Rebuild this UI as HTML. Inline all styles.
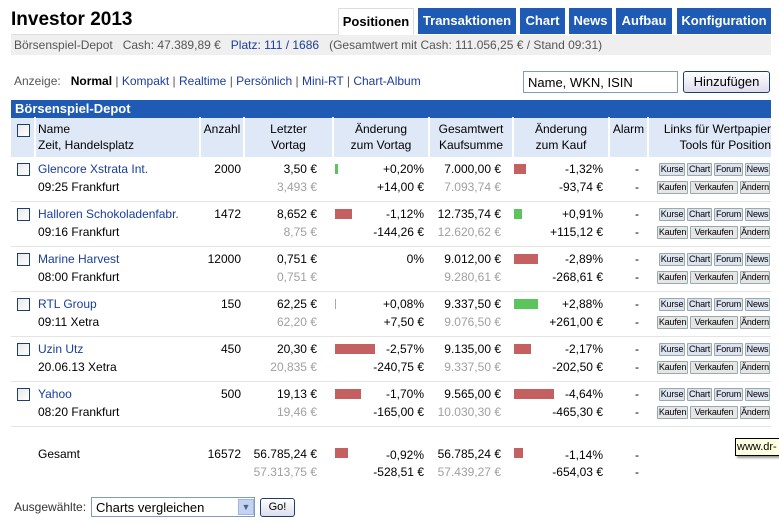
<!DOCTYPE html>
<html><head><meta charset="utf-8"><style>
*{margin:0;padding:0;box-sizing:border-box}
body{width:779px;height:522px;background:#fff;font-family:"Liberation Sans",Arial,sans-serif;font-size:12px;color:#000;position:relative;overflow:hidden}
.a{position:absolute;white-space:nowrap}
.r{text-align:right}
.tab{position:absolute;top:8px;height:26px;background:#1f5bb5;color:#fff;font-weight:bold;font-size:13px;line-height:26px;text-align:center}
.lnk{color:#1a3d9e}
.g{color:#a0a0a0}
.cb{position:absolute;width:13px;height:13px;border:1px solid #1c3f6e;background:linear-gradient(135deg,#e8e8e8,#fff)}
.bar{position:absolute;height:10px}
.red{background:#c46060}.grn{background:#5cc45c}
.bt{position:absolute;height:13px;font-size:9px;letter-spacing:-0.2px;line-height:11px;text-align:center;border:1px solid #9aa;border-radius:1px;overflow:hidden;padding:0}
.b1{background:#dde4f0}.b2{background:#e6e6e6}
.sep{position:absolute;left:11px;width:760px;height:1px;background:#e4e4e4}
.hd{position:absolute;text-align:center;line-height:16px;color:#000}
.vd{position:absolute;top:117px;width:2px;height:40px;background:#fff}
</style></head><body>
<div class="a" style="left:11px;top:9px;font-size:19px;font-weight:bold">Investor 2013</div>
<div class="a" style="left:338px;top:8px;width:76px;height:27px;background:#fff;border:1px solid #ddd;border-bottom:none;font-weight:bold;font-size:13px;line-height:26px;text-align:center">Positionen</div>
<div class="tab" style="left:418px;width:98px">Transaktionen</div>
<div class="tab" style="left:520px;width:45px">Chart</div>
<div class="tab" style="left:569px;width:43px">News</div>
<div class="tab" style="left:616px;width:56px">Aufbau</div>
<div class="tab" style="left:677px;width:94px">Konfiguration</div>
<div class="a" style="left:11px;top:34px;width:327px;height:1px;background:#ddd"></div>
<div class="a" style="left:11px;top:35px;width:760px;height:20px;background:#efefef"></div>
<div class="a" style="left:14px;top:38px;color:#555">Börsenspiel-Depot&nbsp;&nbsp; Cash: 47.389,89 €&nbsp;&nbsp; <span class="lnk">Platz: 111 / 1686</span>&nbsp;&nbsp; (Gesamtwert mit Cash: 111.056,25 € / Stand 09:31)</div>
<div class="a" style="left:14px;top:74px;color:#555">Anzeige:&nbsp;&nbsp; <b style="color:#000">Normal</b> | <span class="lnk">Kompakt</span> | <span class="lnk">Realtime</span> | <span class="lnk">Persönlich</span> | <span class="lnk">Mini-RT</span> | <span class="lnk">Chart-Album</span></div>
<div class="a" style="left:523px;top:71px;width:155px;height:22px;border:1px solid #7f9db9;padding:3px 4px;font-size:13px">Name, WKN, ISIN</div>
<div class="a" style="left:683px;top:71px;width:87px;height:22px;border:1px solid #1c3f6e;border-radius:3px;background:linear-gradient(#fff,#dde);font-size:13px;text-align:center;line-height:20px">Hinzufügen</div>
<div class="a" style="left:11px;top:100px;width:760px;height:18px;background:#1f5bb5;color:#fff;font-weight:bold;font-size:13px;padding-left:4px;line-height:18px">Börsenspiel-Depot</div>
<div class="a" style="left:11px;top:118px;width:760px;height:39px;background:#dfe8f7"></div>
<div class="vd" style="left:34px"></div><div class="vd" style="left:199px"></div><div class="vd" style="left:243px"></div><div class="vd" style="left:332px"></div><div class="vd" style="left:428px"></div><div class="vd" style="left:512px"></div><div class="vd" style="left:608px"></div><div class="vd" style="left:647px"></div>
<div class="cb" style="left:17px;top:124px"></div>
<div class="hd" style="left:38px;top:121px;text-align:left">Name<br>Zeit, Handelsplatz</div>
<div class="hd" style="left:201px;top:121px;width:42px">Anzahl</div>
<div class="hd" style="left:245px;top:121px;width:87px">Letzter<br>Vortag</div>
<div class="hd" style="left:334px;top:121px;width:94px">Änderung<br>zum Vortag</div>
<div class="hd" style="left:430px;top:121px;width:82px">Gesamtwert<br>Kaufsumme</div>
<div class="hd" style="left:514px;top:121px;width:94px">Änderung<br>zum Kauf</div>
<div class="hd" style="left:610px;top:121px;width:37px">Alarm</div>
<div class="hd" style="left:649px;top:121px;width:122px;text-align:right">Links für Wertpapier<br>Tools für Position</div>

<div id="rows"></div>
<script>
var d=[
["Glencore Xstrata Int.","09:25 Frankfurt","2000","3,50 €","3,493 €","grn",3,"+0,20%","+14,00 €","7.000,00 €","7.093,74 €","red",12,"-1,32%","-93,74 €"],
["Halloren Schokoladenfabr.","09:16 Frankfurt","1472","8,652 €","8,75 €","red",17,"-1,12%","-144,26 €","12.735,74 €","12.620,62 €","grn",8,"+0,91%","+115,12 €"],
["Marine Harvest","08:00 Frankfurt","12000","0,751 €","0,751 €","red",0,"0%","","9.012,00 €","9.280,61 €","red",24,"-2,89%","-268,61 €"],
["RTL Group","09:11 Xetra","150","62,25 €","62,20 €","gry",1,"+0,08%","+7,50 €","9.337,50 €","9.076,50 €","grn",24,"+2,88%","+261,00 €"],
["Uzin Utz","20.06.13 Xetra","450","20,30 €","20,835 €","red",40,"-2,57%","-240,75 €","9.135,00 €","9.337,50 €","red",17,"-2,17%","-202,50 €"],
["Yahoo","08:20 Frankfurt","500","19,13 €","19,46 €","red",26,"-1,70%","-165,00 €","9.565,00 €","10.030,30 €","red",40,"-4,64%","-465,30 €"]];
var h="";
d.forEach(function(r,i){var y=162+i*45;
h+='<div class="cb" style="left:17px;top:'+(y+1)+'px"></div>';
h+='<div class="a lnk" style="left:38px;top:'+y+'px">'+r[0]+'</div>';
h+='<div class="a" style="left:38px;top:'+(y+18)+'px">'+r[1]+'</div>';
h+='<div class="a r" style="left:190px;width:51px;top:'+y+'px">'+r[2]+'</div>';
h+='<div class="a r" style="left:250px;width:67px;top:'+y+'px">'+r[3]+'</div>';
h+='<div class="a r g" style="left:250px;width:67px;top:'+(y+18)+'px">'+r[4]+'</div>';
if(r[6])h+='<div class="bar '+r[5]+'" style="left:335px;top:'+(y+2)+'px;width:'+r[6]+'px;'+(r[5]=="gry"?"background:#aaa":"")+'"></div>';
h+='<div class="a r" style="left:340px;width:84px;top:'+y+'px">'+r[7]+'</div>';
h+='<div class="a r" style="left:340px;width:84px;top:'+(y+18)+'px">'+r[8]+'</div>';
h+='<div class="a r" style="left:430px;width:71px;top:'+y+'px">'+r[9]+'</div>';
h+='<div class="a r g" style="left:430px;width:71px;top:'+(y+18)+'px">'+r[10]+'</div>';
h+='<div class="bar '+r[11]+'" style="left:514px;top:'+(y+2)+'px;width:'+r[12]+'px"></div>';
h+='<div class="a r" style="left:520px;width:83px;top:'+y+'px">'+r[13]+'</div>';
h+='<div class="a r" style="left:520px;width:83px;top:'+(y+18)+'px">'+r[14]+'</div>';
h+='<div class="a" style="left:635px;top:'+y+'px">-</div><div class="a" style="left:635px;top:'+(y+18)+'px">-</div>';
h+='<div class="bt b1" style="left:659px;width:26px;top:'+(y+1)+'px">Kurse</div><div class="bt b1" style="left:687px;width:25px;top:'+(y+1)+'px">Chart</div><div class="bt b1" style="left:714px;width:29px;top:'+(y+1)+'px">Forum</div><div class="bt b1" style="left:745px;width:25px;top:'+(y+1)+'px">News</div>';
h+='<div class="bt b2" style="left:657px;width:31px;top:'+(y+19)+'px">Kaufen</div><div class="bt b2" style="left:690px;width:48px;top:'+(y+19)+'px">Verkaufen</div><div class="bt b2" style="left:740px;width:30px;top:'+(y+19)+'px">Ändern</div>';
h+='<div class="sep" style="top:'+(y+39)+'px"></div>';
});
document.getElementById("rows").innerHTML=h;
</script>
<div class="a" style="left:38px;top:447px">Gesamt</div>
<div class="a r" style="left:190px;width:51px;top:447px">16572</div>
<div class="a r" style="left:240px;width:77px;top:447px">56.785,24 €</div>
<div class="a r g" style="left:240px;width:77px;top:465px">57.313,75 €</div>
<div class="bar red" style="left:335px;top:448px;width:13px"></div>
<div class="a r" style="left:340px;width:84px;top:448px">-0,92%</div>
<div class="a r" style="left:340px;width:84px;top:465px">-528,51 €</div>
<div class="a r" style="left:430px;width:71px;top:447px">56.785,24 €</div>
<div class="a r g" style="left:430px;width:71px;top:465px">57.439,27 €</div>
<div class="bar red" style="left:514px;top:448px;width:9px"></div>
<div class="a r" style="left:520px;width:83px;top:448px">-1,14%</div>
<div class="a r" style="left:520px;width:83px;top:465px">-654,03 €</div>
<div class="a" style="left:635px;top:448px">-</div><div class="a" style="left:635px;top:465px">-</div>
<div class="a" style="left:735px;top:438px;width:50px;height:18px;background:#ffffe1;border:1px solid #000;font-size:11px;padding:2px 1px;box-shadow:2px 2px 2px #999">www.dr-</div>
<div class="a" style="left:14px;top:500px;color:#333">Ausgewählte:</div>
<div class="a" style="left:91px;top:497px;width:164px;height:20px;border:1px solid #7f9db9;padding:2px 4px;font-size:13px">Charts vergleichen</div>
<div class="a" style="left:238px;top:499px;width:16px;height:16px;background:#c4d3f4;border:1px solid #a0b4e0;color:#4d6185;font-size:9px;text-align:center;line-height:15px">▼</div>
<div class="a" style="left:260px;top:498px;width:35px;height:19px;border:1px solid #1c3f6e;border-radius:3px;background:linear-gradient(#fff,#dde);font-size:11px;text-align:center;line-height:17px">Go!</div>
</body></html>
